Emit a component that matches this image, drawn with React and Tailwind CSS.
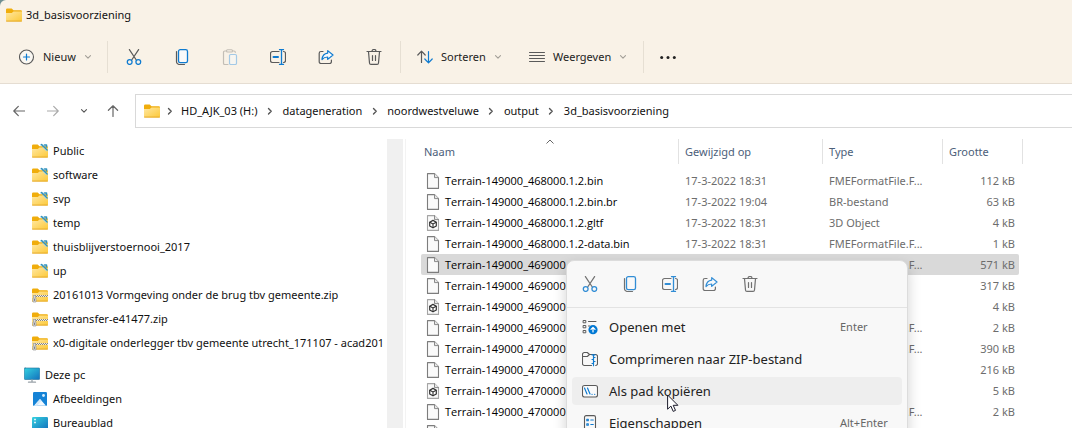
import React from 'react';

const GRAY = '#5a5a5a';
const BLUE = '#0f7bd0';

function Icon({ children, className = 'size-4', box = '0 0 16 16' }) {
  return (
    <svg className={className + ' shrink-0'} viewBox={box} fill="none" strokeLinecap="round" strokeLinejoin="round" aria-hidden="true">
      {children}
    </svg>
  );
}

function CutIcon() {
  return (
    <Icon>
      <path d="M3.4.6 10.3 11M12.6.6 5.7 11" stroke={GRAY} strokeWidth="1.2" />
      <circle cx="3.7" cy="13" r="2.4" stroke={BLUE} strokeWidth="1.3" />
      <circle cx="12.3" cy="13" r="2.4" stroke={BLUE} strokeWidth="1.3" />
    </Icon>
  );
}

function CopyIcon() {
  return (
    <Icon>
      <path d="M2.5 2.5v10a3 3 0 0 0 3 3h5" stroke={GRAY} strokeWidth="1.2" />
      <rect x="4.5" y=".7" width="9" height="13" rx="1.8" fill="#fafafa" stroke={BLUE} strokeWidth="1.3" />
    </Icon>
  );
}

function PasteIcon() {
  return (
    <Icon>
      <path d="M6 15.5H2.8A1.3 1.3 0 0 1 1.5 14.200V3.300A1.300 1.300 0 0 1 2.800 2H4M11 2h1a1.300 1.300 0 0 1 1.300 1.300" stroke="#c3beb6" strokeWidth="1.2" />
      <rect x="4.500" y=".7" width="6" height="2.300" rx="1" stroke="#c3beb6" strokeWidth="1.100" />
      <rect x="7.500" y="5.500" width="7" height="10" rx="1.200" fill="#f7f5f0" stroke="#a3c9e6" strokeWidth="1.200" />
    </Icon>
  );
}

function RenameIcon() {
  return (
    <Icon>
      <path d="M9 2.500H2.500a2 2 0 0 0-2 2v7a2 2 0 0 0 2 2H9M13.500 2.500a2 2 0 0 1 2 2v7a2 2 0 0 1-2 2" stroke={GRAY} strokeWidth="1.200" />
      <path d="M3.500 8H8" stroke={BLUE} strokeWidth="2" />
      <path d="M11.500.6v14.800M9.500.6h4M9.500 15.400h4" stroke={BLUE} strokeWidth="1.300" />
    </Icon>
  );
}

function ShareIcon() {
  return (
    <Icon>
      <path d="M5 2.500H3a1.800 1.800 0 0 0-1.800 1.800v8.400A1.800 1.800 0 0 0 3 14.500h8.600a1.800 1.800 0 0 0 1.800-1.800V11" stroke={GRAY} strokeWidth="1.200" />
      <path d="M9.700 1.600 15 6l-5.300 4.400V8c-2.400 0-4.300.8-5.700 2.500.3-3.600 2.200-6 5.700-6.400z" fill="#f5f9fc" stroke={BLUE} strokeWidth="1.200" />
    </Icon>
  );
}

function TrashIcon() {
  return (
    <Icon>
      <path d="M1 2.500h14M6 2.400a2 2 0 0 1 4 0M2.500 2.700l1 11.300a1.500 1.500 0 0 0 1.500 1.400h6a1.500 1.500 0 0 0 1.500-1.400l1-11.300" stroke={GRAY} strokeWidth="1.200" />
      <path d="M6.500 6.500v5M9.500 6.500v5" stroke={GRAY} strokeWidth="1.200" />
    </Icon>
  );
}

function PlusIcon() {
  return (
    <Icon>
      <circle cx="7.500" cy="8" r="7" fill="#fbf8f2" stroke={GRAY} strokeWidth="1.100" />
      <path d="M7.500 5v6M4.500 8h6" stroke={BLUE} strokeWidth="1.200" />
    </Icon>
  );
}

function SortIcon() {
  return (
    <Icon>
      <path d="M4.500 13.500v-11M.8 6l3.700-3.800L8.200 6" stroke={GRAY} strokeWidth="1.200" />
      <path d="M11.500 2.500v11M7.800 10l3.700 3.800 3.700-3.800" stroke={BLUE} strokeWidth="1.200" />
    </Icon>
  );
}

function LinesIcon() {
  return (
    <Icon>
      <path d="M.5 3.500h15M.5 6.500h15M.5 9.500h15M.5 12.500h15" stroke={GRAY} strokeWidth="1" />
    </Icon>
  );
}

function DotsIcon() {
  return (
    <Icon>
      <circle cx="1.700" cy="8.500" r="1.500" fill="#222" />
      <circle cx="8" cy="8.500" r="1.500" fill="#222" />
      <circle cx="14.300" cy="8.500" r="1.500" fill="#222" />
    </Icon>
  );
}

function CaretDown({ color = '#a39f98' }) {
  return (
    <Icon className="size-2" box="0 0 8 8">
      <path d="M1.500 2.700 4 5.200l2.500-2.500" stroke={color} strokeWidth="1.100" />
    </Icon>
  );
}

function Chevron() {
  return (
    <Icon className="size-2" box="0 0 8 8">
      <path d="M2.500 1.500 5.200 4.200 2.500 6.900" stroke="#555" strokeWidth="1.400" />
    </Icon>
  );
}

function FolderShape() {
  return (
    <>
      <defs>
        <linearGradient id="folderFront" x1="0" y1="0" x2="1" y2="1">
          <stop offset="0" stopColor="#ffe7a2" />
          <stop offset="1" stopColor="#fcc938" />
        </linearGradient>
      </defs>
      <path d="M0 2.700A1.200 1.200 0 0 1 1.200 1.500h4.500L7.500 3.300h7.300A1.200 1.200 0 0 1 16 4.500V8H0z" fill="#f0ad0c" />
      <path d="M0 6h5.800L7.500 4.500H16v8.800a1.200 1.200 0 0 1-1.200 1.200H1.200A1.200 1.200 0 0 1 0 13.300z" fill="url(#folderFront)" />
      <path d="M.5 14.100h15" stroke="#e2a526" strokeWidth=".9" />
    </>
  );
}

function FolderIcon() {
  return <Icon><FolderShape /></Icon>;
}

function LinkedFolderIcon() {
  return (
    <Icon>
      <FolderShape />
      <path d="M8 1h3.500v2H8z" fill="#d9edf6" />
      <path d="m9.500 1.500 5.500 5.500M12.500 2h2v2" stroke="#3292bd" strokeWidth="1.600" />
      <path d="m11 4.500 3.500 3.500" stroke="#a6d8ee" strokeWidth=".9" />
    </Icon>
  );
}

function ZipIcon() {
  return (
    <Icon>
      <FolderShape />
      <path d="M2 8h14v2H2z" fill="#f1ebdc" />
      <path d="M3 8.500H16M4 9.500H16" stroke="#8a877c" strokeWidth="1" strokeDasharray="1 1" strokeLinecap="butt" />
      <path d="M1.500 8.500h2v2.500h.5v4h-3v-4h.5z" fill="#dcdcdc" stroke="#9a9a9a" strokeWidth=".7" />
      <path d="M2.500 12v1.500" stroke="#777" strokeWidth=".9" />
    </Icon>
  );
}

function PcIcon() {
  return (
    <Icon>
      <defs>
        <linearGradient id="screen" x1="0" y1="0" x2="1" y2="1">
          <stop offset="0" stopColor="#35d2e0" />
          <stop offset="1" stopColor="#1271bd" />
        </linearGradient>
      </defs>
      <rect x=".3" y="1" width="15.400" height="11.500" rx=".8" fill="url(#screen)" stroke="#1c6f98" strokeWidth=".6" />
      <path d="M8 12.800v2M4.500 15.200h7" stroke="#9aa3a9" strokeWidth="1.300" />
    </Icon>
  );
}

function PictureIcon() {
  return (
    <Icon>
      <rect x="1" y="1" width="14" height="14" rx="1.200" fill="#1583d6" />
      <path d="M2 14.800 8 8l6 6.800z" fill="#f2f9ff" />
      <path d="M2 14.800 8 8l1.500 1.700-4.500 5.100z" fill="#d4eafb" />
      <circle cx="11.500" cy="4.500" r="1.400" fill="#d9f0ff" />
    </Icon>
  );
}

function DesktopIcon() {
  return (
    <Icon>
      <rect x="0" y="2" width="16" height="12.500" rx="1.200" fill="url(#screen)" />
      <path d="M2.200 4.500h1.600M2.200 7.500h1.600" stroke="#fff" strokeWidth="1.600" strokeLinecap="butt" />
    </Icon>
  );
}

function FileIcon({ cube }) {
  return (
    <Icon className="h-4 w-[14px]" box="0 0 14 16">
      <path d="M1.500.6h7l4 4v10.800h-11z" fill="#fafafa" stroke={cube ? '#a5a5a5' : '#7d7d7d'} strokeWidth="1.100" />
      <path d="M8.500.6v4h4" fill="#e6e6e6" stroke="#8a8a8a" strokeWidth="1" />
      {cube && (
        <>
          <path d="M7 5.400 10.300 7.200v3.700L7 12.800 3.700 10.900V7.200z" fill="#fff" stroke="#333" strokeWidth="1.200" />
          <path d="M3.900 7.300 7 9l3.100-1.700M7 9v3.500" stroke="#333" strokeWidth="1.100" />
        </>
      )}
    </Icon>
  );
}

function OpenWithIcon() {
  return (
    <Icon>
      <path d="M1.500 1.500h2.300v2.300H1.500zM1.500 6.500h2.300v2.300H1.500zM1.500 11.500h2.300v2.300H1.500zM6.500 2.500h7.500M6.500 7h1.500" stroke={GRAY} strokeWidth="1" />
      <circle cx="11" cy="10.700" r="4.600" fill="#0078d4" />
      <path d="M11 13V8.500M9 10.300l2-2 2 2" stroke="#fff" strokeWidth="1.200" />
    </Icon>
  );
}

function ZipOutlineIcon() {
  return (
    <Icon>
      <path d="M9.500 14.500H2.300A1.800 1.800 0 0 1 .5 12.700V3.300A1.800 1.800 0 0 1 2.300 1.500h3L7.500 3.500h6.200a1.800 1.800 0 0 1 1.800 1.800v7.400a1.800 1.800 0 0 1-1.800 1.800M.5 5.500h4.800l2.200-2" stroke={GRAY} strokeWidth="1.100" />
      <path d="M10 3.800h3M11.500 4v10.700M11.500 6.500H13M10 8.500h1.500M11.500 10.500H13M10 12.500h1.500" stroke={BLUE} strokeWidth="1.200" />
    </Icon>
  );
}

function PathIcon() {
  return (
    <Icon>
      <rect x=".5" y="2.500" width="15" height="11.500" rx="2" fill="#fafafa" stroke={GRAY} strokeWidth="1.100" />
      <path d="m2.500 5 2.500 6M5.500 5 8 11M10 11.300h.1M12.700 11.300h.1" stroke={BLUE} strokeWidth="1.200" />
    </Icon>
  );
}

function PropertiesIcon() {
  return (
    <Icon>
      <rect x="2.500" y=".6" width="11" height="14.800" rx="1.600" stroke={GRAY} strokeWidth="1.100" />
      <path d="M4.800 4.200h1.500v1.500H4.800zM4.800 8.800h1.500v1.500H4.800zM8.800 5h2.500M8.800 9.500h2.500" stroke={BLUE} strokeWidth="1.100" />
    </Icon>
  );
}

const commands = [
  ['Knippen', CutIcon],
  ['Kopiëren', CopyIcon],
  ['Plakken', PasteIcon],
  ['Naam wijzigen', RenameIcon],
  ['Delen', ShareIcon],
  ['Verwijderen', TrashIcon],
];

const crumbs = ['HD_AJK_03 (H:)', 'datageneration', 'noordwestveluwe', 'output', '3d_basisvoorziening'];

const driveItems = [
  ['Public', LinkedFolderIcon],
  ['software', LinkedFolderIcon],
  ['svp', LinkedFolderIcon],
  ['temp', LinkedFolderIcon],
  ['thuisblijverstoernooi_2017', LinkedFolderIcon],
  ['up', LinkedFolderIcon],
  ['20161013 Vormgeving onder de brug tbv gemeente.zip', ZipIcon],
  ['wetransfer-e41477.zip', ZipIcon],
  ['x0-digitale onderlegger tbv gemeente utrecht_171107 - acad201', ZipIcon],
];

const pcItems = [
  ['Afbeeldingen', PictureIcon],
  ['Bureaublad', DesktopIcon],
];

const FME = 'FMEFormatFile.F...';
const files = [
  ['Terrain-149000_468000.1.2.bin', '17-3-2022 18:31', FME, '112 kB'],
  ['Terrain-149000_468000.1.2.bin.br', '17-3-2022 19:04', 'BR-bestand', '63 kB'],
  ['Terrain-149000_468000.1.2.gltf', '17-3-2022 18:31', '3D Object', '4 kB'],
  ['Terrain-149000_468000.1.2-data.bin', '17-3-2022 18:31', FME, '1 kB'],
  ['Terrain-149000_469000.1.2.bin', '17-3-2022 18:31', FME, '571 kB'],
  ['Terrain-149000_469000.1.2.bin.br', '17-3-2022 19:04', 'BR-bestand', '317 kB'],
  ['Terrain-149000_469000.1.2.gltf', '17-3-2022 18:31', '3D Object', '4 kB'],
  ['Terrain-149000_469000.1.2-data.bin', '17-3-2022 18:31', FME, '2 kB'],
  ['Terrain-149000_470000.1.2.bin', '17-3-2022 18:31', FME, '390 kB'],
  ['Terrain-149000_470000.1.2.bin.br', '17-3-2022 19:04', 'BR-bestand', '216 kB'],
  ['Terrain-149000_470000.1.2.gltf', '17-3-2022 18:31', '3D Object', '5 kB'],
  ['Terrain-149000_470000.1.2-data.bin', '17-3-2022 18:31', FME, '2 kB'],
  ['', '', '', ''],
];
const selectedIndex = 4;

const menuItems = [
  ['Openen met', OpenWithIcon, 'Enter'],
  ['Comprimeren naar ZIP-bestand', ZipOutlineIcon, ''],
  ['Als pad kopiëren', PathIcon, ''],
  ['Eigenschappen', PropertiesIcon, 'Alt+Enter'],
];
const hoveredItem = 2;

function Divider() {
  return <div className="h-8 w-px shrink-0 bg-[#e6dfd3]" />;
}

function CommandBar() {
  return (
    <div className="flex h-[53px] items-center border-b border-[#e5ddd2] text-[#222]" role="toolbar" aria-label="Opdrachten">
      <button className="flex h-8 w-[107px] shrink-0 items-center gap-2 pl-[19px]">
        <PlusIcon />Nieuw<CaretDown />
      </button>
      <Divider />
      <div className="flex px-[2px]">
        {commands.map(([label, Glyph]) => (
          <button key={label} aria-label={label} className="flex h-8 w-12 items-center justify-center">
            <Glyph />
          </button>
        ))}
      </div>
      <Divider />
      <button className="flex h-8 w-28 shrink-0 items-center gap-2 pl-4">
        <SortIcon />Sorteren<CaretDown />
      </button>
      <button className="flex h-8 w-[130px] shrink-0 items-center gap-2 pl-4">
        <LinesIcon />Weergeven<CaretDown />
      </button>
      <Divider />
      <button aria-label="Meer weergeven" className="flex h-8 w-12 shrink-0 items-center justify-center">
        <DotsIcon />
      </button>
    </div>
  );
}

function AddressRow() {
  return (
    <div className="flex shrink-0 items-center pt-[10px] pb-[11px] pl-[3px]">
      <button aria-label="Terug" className="flex h-8 w-8 shrink-0 items-center justify-center">
        <Icon className="size-3" box="0 0 12 12"><path d="M11.500 6H.8M5.300 1.400.8 6l4.500 4.600" stroke="#666" strokeWidth="1.200" /></Icon>
      </button>
      <button aria-label="Vooruit" className="flex h-8 w-9 shrink-0 items-center justify-center">
        <Icon className="size-3" box="0 0 12 12"><path d="M.5 6h10.700M6.700 1.400 11.200 6l-4.500 4.600" stroke="#aaa" strokeWidth="1.200" /></Icon>
      </button>
      <button aria-label="Recente locaties" className="flex h-8 w-[26px] shrink-0 items-center justify-center">
        <CaretDown color="#555" />
      </button>
      <button aria-label="Omhoog" className="flex h-8 w-8 shrink-0 items-center justify-center">
        <Icon className="size-3" box="0 0 12 12"><path d="M6 11.500V.8M1.400 5.300 6 .8l4.600 4.500" stroke="#666" strokeWidth="1.200" /></Icon>
      </button>
      <nav aria-label="Adres" className="-mr-1 ml-[6px] flex h-[34px] flex-1 items-center border border-[#d9d9d9] pl-2">
        <FolderIcon />
        {crumbs.map((name, i) => (
          <React.Fragment key={name}>
            <span className={i === 0 ? 'flex w-[21px] justify-center pr-[2px]' : 'flex w-[25px] justify-center'}><Chevron /></span>
            <a href="#" className="whitespace-nowrap">{name}</a>
          </React.Fragment>
        ))}
      </nav>
    </div>
  );
}

function TreeItem({ name, Glyph, indent = 'pl-8' }) {
  return (
    <li>
      <a href="#" className={'flex h-6 items-center gap-[5px] whitespace-nowrap ' + indent}>
        <Glyph />{name}
      </a>
    </li>
  );
}

function Sidebar() {
  return (
    <aside className="flex w-[403px] shrink-0">
      <div className="min-w-0 flex-1 overflow-hidden">
        <ul>
          {driveItems.map(([name, Glyph]) => <TreeItem key={name} name={name} Glyph={Glyph} />)}
        </ul>
        <ul className="mt-2">
          <TreeItem name="Deze pc" Glyph={PcIcon} indent="pl-6" />
          {pcItems.map(([name, Glyph]) => <TreeItem key={name} name={name} Glyph={Glyph} />)}
        </ul>
      </div>
      <div className="w-4 shrink-0 bg-[#f0f0f0]" />
    </aside>
  );
}

function HeadCell({ children, pad = 'pl-[6px]', span = 1 }) {
  return (
    <th scope="col" colSpan={span} className="h-[31px] p-0 text-left align-top font-normal text-[#4c607a]">
      <div className={'relative flex h-[25px] items-center border-r border-[#e2e2e2] ' + pad}>{children}</div>
    </th>
  );
}

function FileList() {
  return (
    <main className="ml-[2px] min-w-0 flex-1 overflow-hidden border-l border-[#f3f3f3] pl-[15px]">
      <table className="w-[602px] table-fixed border-collapse whitespace-nowrap text-[#6d6d6d]">
        <colgroup>
          <col className="w-[258px]" />
          <col className="w-36" />
          <col className="w-[120px]" />
          <col className="w-[76px]" />
          <col className="w-1" />
        </colgroup>
        <thead>
          <tr>
            <HeadCell pad="pl-[3px]">
              Naam
              <svg className="absolute top-0 left-1/2 h-[5px] w-2 -translate-x-1/2" viewBox="0 0 8 5" fill="none" aria-hidden="true">
                <path d="M.5 4.500 4 1l3.500 3.500" stroke="#666" />
              </svg>
            </HeadCell>
            <HeadCell>Gewijzigd op</HeadCell>
            <HeadCell>Type</HeadCell>
            <HeadCell span={2}>Grootte</HeadCell>
          </tr>
        </thead>
        <tbody>
          {files.map(([name, date, type, size], i) => {
            const bg = i === selectedIndex ? 'bg-[#d9d9d9] ' : '';
            return (
              <tr key={name} className="h-[21px]">
                <td className={bg + "rounded-l-[2px] p-0 pl-[5px] font-['Open_Sans','Noto_Sans',sans-serif] text-black"}>
                  <span className="flex items-center gap-[5px]"><FileIcon cube={name.endsWith('.gltf')} />{name}</span>
                </td>
                <td className={bg + 'p-0 pl-[6px]'}>{date}</td>
                <td className={bg + 'p-0 pl-[6px]'}>{type}</td>
                <td className={bg + 'rounded-r-[2px] p-0 pr-1 text-right'}>{size}</td>
                <td className="p-0" />
              </tr>
            );
          })}
        </tbody>
      </table>
    </main>
  );
}

function ContextMenu() {
  return (
    <div role="menu" className="absolute top-[260px] left-[566px] w-[342px] rounded-lg border border-[#dcdcdc] bg-[#f8f8f8] text-[13px] text-[#222] shadow-[0_6px_14px_rgba(0,0,0,0.18)]">
      <div className="flex h-[47px] items-center border-b border-[#e3e3e3] pl-[3px]">
        {commands.filter(([label]) => label !== 'Plakken').map(([label, Glyph]) => (
          <button key={label} role="menuitem" aria-label={label} className="flex h-8 w-10 items-center justify-center opacity-85">
            <Glyph />
          </button>
        ))}
      </div>
      <div className="flex flex-col gap-1 px-[5px] py-[5px]">
        {menuItems.map(([label, Glyph, keys], i) => (
          <button key={label} role="menuitem" className={(i === hoveredItem ? 'bg-[#eeeeee] ' : '') + 'flex h-7 items-center gap-[11px] rounded pl-[10px] text-left'}>
            <Glyph />
            <span className="flex-1">{label}</span>
            <span className="w-[62px] text-[11px] text-[#666]">{keys}</span>
          </button>
        ))}
      </div>
      <svg className="absolute top-[133px] left-[100px] h-[19px] w-3" viewBox="0 0 12 19" aria-hidden="true">
        <path d="M.6 1v14.200l3.300-3.100 2.300 5.300 2.300-1-2.300-5.100h4.700z" fill="#fff" stroke="#1b1b2b" strokeWidth="1" />
      </svg>
    </div>
  );
}

export default function App() {
  return (
    <div className="relative flex h-screen flex-col overflow-hidden bg-white font-['Noto_Sans','Open_Sans',sans-serif] text-[11px] leading-4 text-[#111]">
      <header className="shrink-0 bg-[#6f8f92]">
        <div className="rounded-tl-md bg-[#f9f2e7]">
          <div className="flex h-[31px] items-center gap-1 pl-[6px] pb-[2px]">
            <FolderIcon />
            <h1>3d_basisvoorziening</h1>
          </div>
          <CommandBar />
        </div>
      </header>
      <AddressRow />
      <div className="flex min-h-0 flex-1">
        <Sidebar />
        <FileList />
      </div>
      <ContextMenu />
    </div>
  );
}
